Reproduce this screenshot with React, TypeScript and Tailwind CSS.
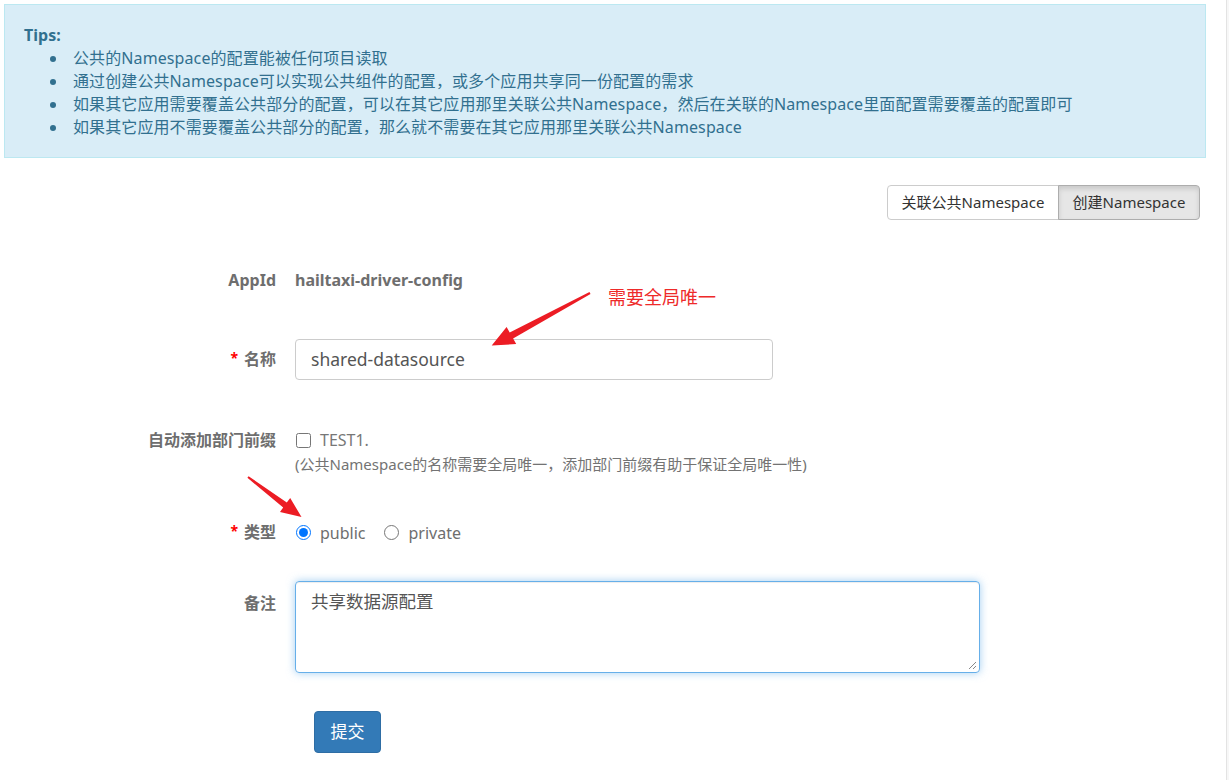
import React from "react";

const TIPS = [
  "公共的Namespace的配置能被任何项目读取",
  "通过创建公共Namespace可以实现公共组件的配置，或多个应用共享同一份配置的需求",
  "如果其它应用需要覆盖公共部分的配置，可以在其它应用那里关联公共Namespace，然后在关联的Namespace里面配置需要覆盖的配置即可",
  "如果其它应用不需要覆盖公共部分的配置，那么就不需要在其它应用那里关联公共Namespace",
];

const Label = ({ children, required }: { children: React.ReactNode; required?: boolean }) => (
  <div className="w-[276px] shrink-0 text-right text-[16px] leading-[24px] font-bold text-[#6e6e6e]">
    {required && <span className="text-[#ff0000] text-[14px] mr-[6px] relative top-[-2px]">*</span>}
    {children}
  </div>
);

const Arrows = () => (
  <svg className="absolute inset-0 pointer-events-none" width={1229} height={780} viewBox="0 0 1229 780">
    {/* 名称 arrow */}
    <polygon
      fill="#ec1c24"
      points="589.5,292.1 509.7,332.4 506.6,327 491.7,345.5 516.2,344 513.1,338.6 590.5,293.9"
    />
    {/* 类型 arrow */}
    <polygon
      fill="#ec1c24"
      points="248.6,476.2 286.8,502.6 290.2,498 301.5,517 280,512 283.2,507.4 247.4,477.8"
    />
  </svg>
);

export default function App() {
  return (
    <div className="relative w-[1229px] h-[780px] overflow-hidden bg-white font-['Noto_Sans','Noto_Sans_CJK_SC',sans-serif]">
      {/* tips */}
      <div className="ml-[4px] mt-[4px] w-[1202px] h-[154px] border border-[#bce8f1] bg-[#d9edf7] pt-[19px] pl-[19px] text-[#31708f] text-[16px] leading-[23px]">
        <div className="font-bold">Tips:</div>
        <ul className="tracking-[0.1px]">
          {TIPS.map((t) => (
            <li key={t} className="flex items-center">
              <span className="ml-[26px] w-[6px] h-[6px] rounded-full bg-[#31708f]" />
              <span className="ml-[17px]">{t}</span>
            </li>
          ))}
        </ul>
      </div>

      {/* button group */}
      <div className="mt-[27px] flex justify-end pr-[29px]">
        <button className="w-[172px] h-[35px] bg-white border border-[#cccccc] rounded-l-[4px] text-[15px] text-[#333]">
          关联公共Namespace
        </button>
        <button className="-ml-px w-[142px] h-[35px] bg-[#e6e6e6] border border-[#adadad] rounded-r-[4px] text-[15px] text-[#333] shadow-[inset_0_3px_5px_rgba(0,0,0,0.125)]">
          创建Namespace
        </button>
      </div>

      {/* form */}
      <div className="flex flex-col">
        <div className="mt-[48px] flex gap-[19px]">
          <Label>AppId</Label>
          <div className="text-[16px] leading-[24px] font-bold text-[#6e6e6e]">hailtaxi-driver-config</div>
        </div>

        <div className="mt-[47px] flex items-center gap-[19px]">
          <Label required>名称</Label>
          <div className="w-[478px] h-[41px] border border-[#cccccc] rounded-[4px] px-[15px] flex items-center text-[17.5px] text-[#555]">
            shared-datasource
          </div>
        </div>

        <div className="mt-[48px] flex gap-[19px]">
          <Label>自动添加部门前缀</Label>
          <div className="flex flex-col">
            <div className="flex items-center h-[24px] text-[16px] text-[#777]">
              <input type="checkbox" readOnly className="w-[15px] h-[15px] m-0 ml-px" />
              <span className="ml-[9px]">TEST1.</span>
            </div>
            <div className="text-[15px] leading-[24px] text-[#737373]">
              (公共Namespace的名称需要全局唯一，添加部门前缀有助于保证全局唯一性)
            </div>
          </div>
        </div>

        <div className="mt-[44px] flex items-center gap-[19px]">
          <Label required>类型</Label>
          <div className="flex items-center h-[24px] text-[16px] text-[#6e6e6e]">
            <input type="radio" name="t" defaultChecked className="w-[15px] h-[15px] m-0 ml-px" />
            <span className="ml-[9px]">public</span>
            <input type="radio" name="t" className="w-[15px] h-[15px] m-0 ml-[18px]" />
            <span className="ml-[10px]">private</span>
          </div>
        </div>

        <div className="mt-[36px] flex gap-[19px]">
          <div className="pt-[10px]">
            <Label>备注</Label>
          </div>
          <div className="relative w-[685px] h-[92px] border border-[#66afe9] rounded-[4px] px-[15px] pt-[7px] text-[17.5px] leading-[24px] text-[#555] shadow-[inset_0_1px_1px_rgba(0,0,0,0.075),0_0_8px_rgba(102,175,233,0.6)]">
            共享数据源配置
            <svg className="absolute right-[2px] bottom-[2px]" width="9" height="9" viewBox="0 0 9 9">
              <path d="M8 1 L1 8 M8 5 L5 8" stroke="#888" strokeWidth="1" />
            </svg>
          </div>
        </div>

        <div className="mt-[38px] ml-[314px]">
          <button className="w-[67px] h-[42px] bg-[#337ab7] border border-[#2e6da4] rounded-[4px] text-white text-[17px]">
            提交
          </button>
        </div>
      </div>

      {/* annotation */}
      <div className="absolute left-[608px] top-[285px] text-[18px] leading-[24px] text-[#ee2a2a]">需要全局唯一</div>
      <Arrows />

      {/* scrollbar edge */}
      <div className="absolute right-0 top-0 h-full w-[3px] border-l border-[#e3e3e3] bg-[#f7f7f7]" />
    </div>
  );
}
